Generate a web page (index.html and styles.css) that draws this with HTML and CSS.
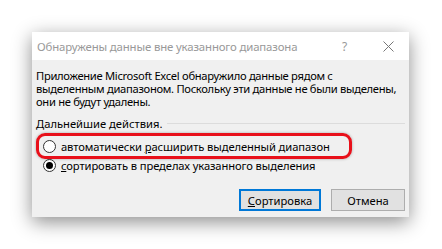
FILE: index.html
```html
<!DOCTYPE html>
<html lang="ru">
<head>
  <meta charset="UTF-8" />
  <title>Сортировка</title>
  <link rel="stylesheet" href="styles.css">
</head>
<body>

  <div class="dialog">
    <!-- Заголовок окна -->
    <div class="titlebar">
      <span class="title">Обнаружены данные вне указанного диапазона</span>
      <span class="help">?</span>
      <span class="close">
        <svg width="11" height="11" viewBox="0 0 11 11">
          <path d="M0.5 0.5 L10.5 10.5 M10.5 0.5 L0.5 10.5" stroke="#777" stroke-width="1" fill="none"/>
        </svg>
      </span>
    </div>

    <div class="content">
      <p class="message">Приложение Microsoft Excel обнаружило данные рядом с<br>выделенным диапазоном. Поскольку эти данные не были выделены,<br>они не будут удалены.</p>

      <div class="group">
        <span>Дальнейшие действия.</span>
        <span class="line"></span>
      </div>

      <div class="options">
        <label class="option">
          <span class="radio"></span>
          <span>автоматически <u>р</u>асширить выделенный диапазон</span>
        </label>
        <label class="option">
          <span class="radio checked"></span>
          <span><u>с</u>ортировать в пределах указанного выделения</span>
        </label>
        <div class="mark"></div>
      </div>

      <div class="buttons">
        <button class="btn default"><u>С</u>ортировка</button>
        <button class="btn">Отмена</button>
      </div>
    </div>
  </div>

</body>
</html>
```

FILE: styles.css
```css
body {
  margin: 0;
  padding: 32px;
  background: #fff;
  font-family: "Noto Sans", "Open Sans", sans-serif;
  font-size: 11.2px;
  color: #000;
}
.dialog {
  width: 377px;
  height: 185px;
  background: #f0f0f0;
  box-shadow: 0 5px 18px rgba(0, 0, 0, 0.45);
}
.titlebar {
  height: 28px;
  background: #fff;
  display: flex;
  align-items: center;
  padding-left: 5px;
}
.title {
  color: #999;
  flex: 1;
  font-size: 11.4px;
  letter-spacing: -0.15px;
}
.help {
  color: #999;
  width: 20px;
  margin-right: 21px;
  font-size: 12px;
}
.close {
  display: flex;
  width: 11px;
  margin-right: 15px;
}
.content {
  padding: 9px 4px 0 4px;
}
.message {
  margin: 0;
  line-height: 13px;
  white-space: nowrap;
  letter-spacing: -0.3px;
}
.group {
  display: flex;
  align-items: center;
  margin-top: 9px;
  line-height: 13px;
}
.line {
  flex: 1;
  height: 1px;
  background: #dcdcdc;
  margin-left: 5px;
}
.options {
  position: relative;
  margin-top: 7px;
}
.option {
  display: flex;
  align-items: center;
  height: 19px;
  padding-left: 7px;
  letter-spacing: -0.1px;
}
.radio {
  width: 11px;
  height: 11px;
  border: 1px solid #333;
  border-radius: 50%;
  background: #fff;
  margin-right: 5px;
  display: flex;
  align-items: center;
  justify-content: center;
}
.radio.checked::after {
  content: "";
  width: 7px;
  height: 7px;
  border-radius: 50%;
  background: #000;
}
.mark {
  position: absolute;
  left: 0;
  top: -4px;
  width: 310px;
  height: 20px;
  border: 3px solid #e8101a;
  border-radius: 9px;
  box-shadow: 0 0 3px rgba(0, 0, 0, 0.3);
}
.buttons {
  display: flex;
  justify-content: flex-end;
  gap: 10px;
  margin-top: 14px;
}
.btn {
  font-family: inherit;
  font-size: 11.2px;
  height: 22px;
  background: #e1e1e1;
  border: 1px solid #adadad;
  padding: 0;
  width: 74px;
  color: #000;
}
.btn.default {
  width: 82px;
  border: 2px solid #0078d7;
}
```
